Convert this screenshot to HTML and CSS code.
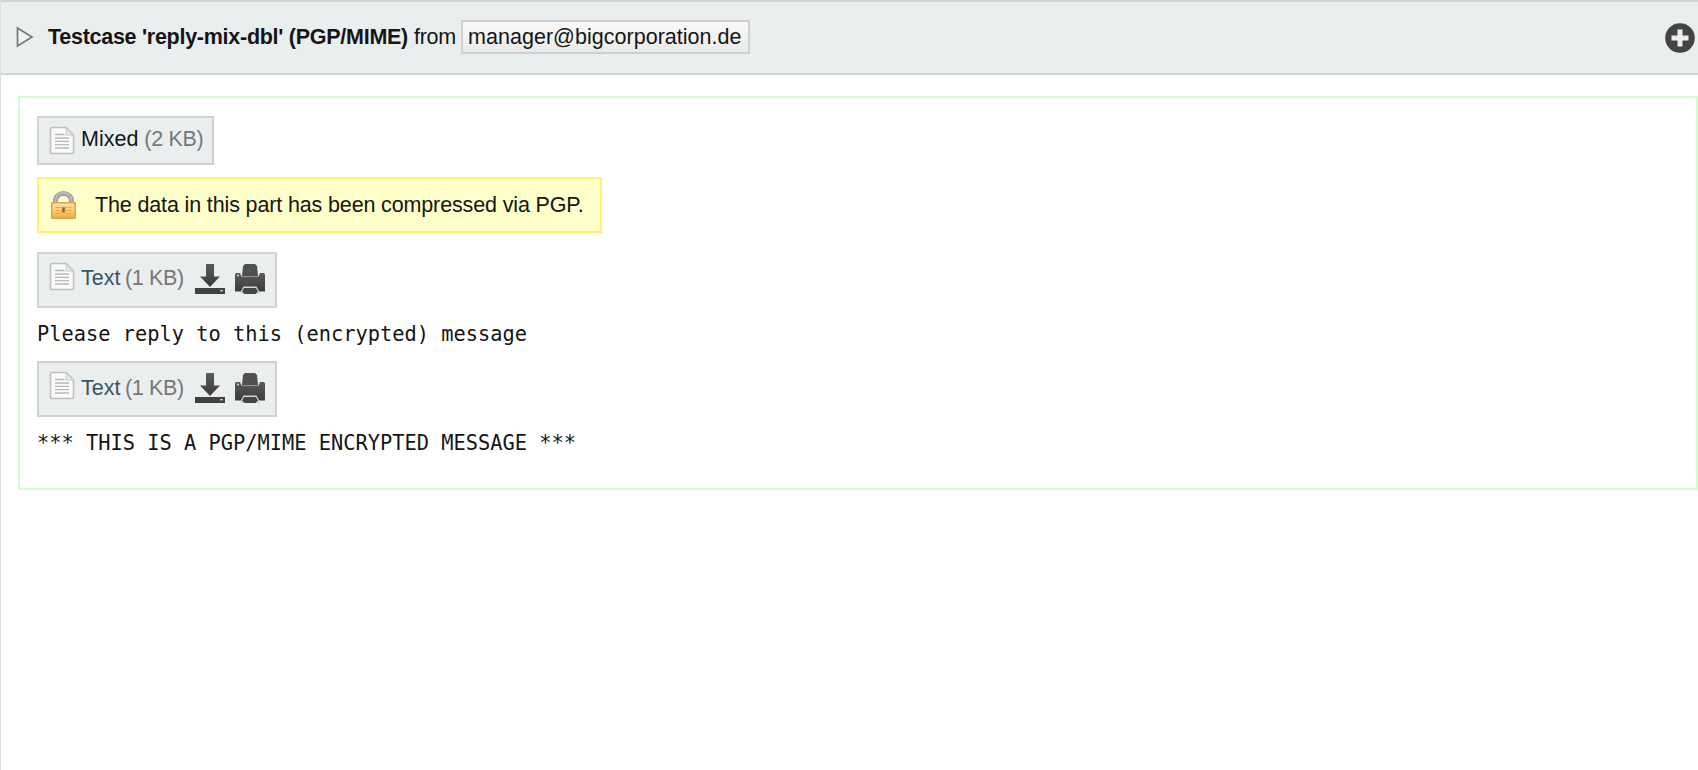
FILE: index.html
```
<!DOCTYPE html>
<html lang="en">
<head>
<meta charset="utf-8">
<title>Message</title>
<link rel="stylesheet" href="styles.css">
</head>
<body>
<svg width="0" height="0" class="defs">
  <defs>
    <linearGradient id="gold" x1="0" y1="0" x2="0" y2="1"><stop offset="0" stop-color="#fbe3a8"/><stop offset=".5" stop-color="#fbd07a"/><stop offset="1" stop-color="#f3aa3e"/></linearGradient>
    <linearGradient id="dark" x1="0" y1="0" x2="0" y2="1"><stop offset="0" stop-color="#5a5a5a"/><stop offset="1" stop-color="#3c3c3c"/></linearGradient>
    <symbol id="doc" viewBox="0 0 26 29">
      <path d="M3 1.500H17L24.500 9V26Q24.500 27.500 23 27.500H3Q1.500 27.500 1.500 26V3Q1.500 1.500 3 1.500Z" fill="#fafafa" stroke="#bfc0c0" stroke-width="1.600"/>
      <path d="M17 2V9H24Z" fill="#e9e9e9" stroke="#cacaca"/>
      <path d="M6 8.500H15.500M6 12H20M6 15.300H20M6 18.600H20M6 22H20" stroke="#b9b9b9" stroke-width="1.300"/>
    </symbol>
    <symbol id="download" viewBox="0 0 30 30">
      <path d="M11 0H19V12.500H25L15 23L5 12.500H11Z" fill="url(#dark)"/>
      <path d="M0 24H30V30H0Z" fill="#414141"/>
      <path d="M25 26.700H28" stroke="#ccc" stroke-width="1.300"/>
    </symbol>
    <symbol id="printer" viewBox="0 0 30 30">
      <path d="M1 9H5L6.500 12.500H23.500L25 9H29L30 10.500V27.500H0V10.500Z" fill="url(#dark)"/>
      <path d="M10 0H20L22 2L23 12H7L8 2Z" fill="#505050"/>
      <path d="M6.800 12.600H23.200" stroke="#8a8b8b" stroke-width=".8"/>
      <path d="M5.500 28L8.500 22.500H21.500L24.500 28V30H5.500Z" fill="#d5d8d8"/>
      <path d="M9 24H21L23 27.500L20.500 30H9.500L7 27.500Z" fill="#454545"/>
      <circle cx="3" cy="11.500" r="1" fill="#ddd"/>
    </symbol>
  </defs>
</svg>
<main class="viewer">
  <header class="bar">
    <svg class="toggle" viewBox="0 0 18 22"><path d="M1.500 2L16 11L1.500 20Z" fill="#f1f3f3" stroke="#777" stroke-width="1.700"/></svg>
    <strong class="subject">Testcase 'reply-mix-dbl' (PGP/MIME)</strong>
    <span class="from">from</span>
    <span class="address">manager@bigcorporation.de</span>
    <svg class="more" viewBox="0 0 30 30"><circle cx="15" cy="15" r="14.800" fill="#444"/><path d="M12.500 6.500H17.500V12.500H23.500V17.500H17.500V23.500H12.500V17.500H6.500V12.500H12.500Z" fill="#ebeeef"/></svg>
  </header>
  <section class="content">
    <div class="chip mixed"><svg class="doc"><use href="#doc"/></svg><span class="name">Mixed</span><span class="size">(2 KB)</span></div>
    <div class="notice">
      <svg class="lock" viewBox="0 0 25 28"><path d="M4.500 12V9.500A8 7 0 0 1 20.500 9.500V12" fill="none" stroke="#a0a0a0" stroke-width="5"/><path d="M4.500 11V9A8 7 0 0 1 20.500 9V11" fill="none" stroke="#bcbcbc" stroke-width="2"/><path d="M.8 11.800H24.200V27.200H.8Z" fill="url(#gold)" stroke="#e0a04a" stroke-width="1.500"/><path d="M4.500 16.500H20.500M4.500 19.500H20.500M4.500 22.500H20.500" stroke="#f2a93c" stroke-width="1.200"/><path d="M10 15.500H15V23H10Z" fill="#f3b95c"/><path d="M11.300 16.500H13.800V21.500H11.300Z" fill="#986426"/></svg>
      <span class="noticetext">The data in this part has been compressed via PGP.</span>
    </div>
    <div class="chip text first"><svg class="doc"><use href="#doc"/></svg><span class="name link">Text</span><span class="size">(1 KB)</span><svg class="act"><use href="#download"/></svg><svg class="act"><use href="#printer"/></svg></div>
    <pre class="body">Please reply to this (encrypted) message</pre>
    <div class="chip text second"><svg class="doc"><use href="#doc"/></svg><span class="name link">Text</span><span class="size">(1 KB)</span><svg class="act"><use href="#download"/></svg><svg class="act"><use href="#printer"/></svg></div>
    <pre class="body">*** THIS IS A PGP/MIME ENCRYPTED MESSAGE ***</pre>
  </section>
</main>
</body>
</html>
```
FILE: styles.css
```
* { box-sizing: border-box; }
body { margin: 0; background: #fff; color: #151515; font: 21.5px/24px "Liberation Sans", Arial, sans-serif; overflow: hidden; }
.defs { display: block; width: 0; height: 0; }
.viewer { height: 770px; border-left: 1px solid #dedede; }
.bar { display: flex; align-items: flex-start; height: 75px; padding: 18px 3px 0 14px; background: #ebeeef; border-top: 2px solid #d3d4d4; border-bottom: 2px solid #d3d4d4; white-space: nowrap; }
.toggle { width: 18px; height: 22px; margin: 6px 14px 0 1px; flex: none; }
.subject { width: 366px; margin-top: 5px; letter-spacing: -.27px; }
.from { width: 47px; margin-top: 5px; letter-spacing: -.3px; }
.address { width: 289px; height: 34px; padding: 3px 0 0 5px; border: 2px solid #cfd0d0; background: linear-gradient(#fafaf9, #ebeaea); line-height: 24px; letter-spacing: .03px; }
.more { width: 30px; height: 30px; margin: 3px 0 0 auto; flex: none; }
.content { height: 394px; margin: 21px 0 0 17px; padding: 18px 17px; border: 2px solid #d1fcd2; }
.chip { display: flex; align-items: flex-start; border: 2px solid #d0d2d2; background: #ebeeef; white-space: nowrap; }
.doc { width: 26px; height: 29px; margin: 8px 6px 0 10px; flex: none; }
.name { color: #151515; margin-top: 9px; }
.size { color: #777; margin-top: 9px; margin-left: 6px; letter-spacing: -.35px; }
.link { color: #395565; }
.mixed { width: 177px; height: 49px; }
.text { width: 240px; height: 56px; }
.text .name { width: 39px; }
.text .size { width: 60px; margin-left: 5px; }
.first .name, .first .size { margin-top: 12px; }
.second .name, .second .size { margin-top: 13px; }
.act { width: 30px; height: 30px; margin: 10px 0 0 10px; flex: none; }
.notice { display: flex; width: 565px; height: 56px; margin: 12px 0 19px; border: 2px solid #fff273; background: #ffffc9; white-space: nowrap; }
.lock { width: 25px; height: 28px; margin: 12px 0 0 12px; }
.noticetext { margin: 14px 0 0 19px; letter-spacing: -.14px; }
.body { height: 24px; margin: 14px 0 15px; font: 20.350px/24px "DejaVu Sans Mono", monospace; }
```
